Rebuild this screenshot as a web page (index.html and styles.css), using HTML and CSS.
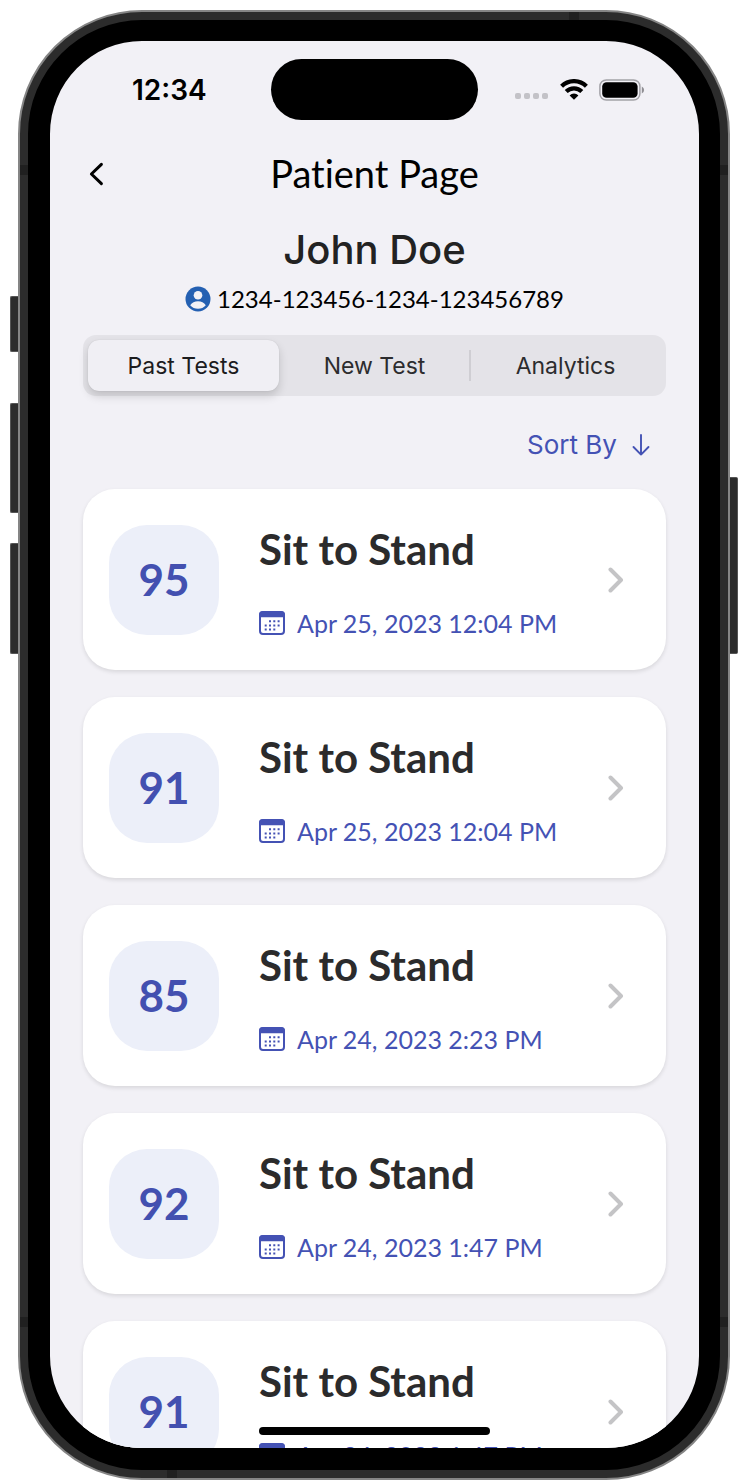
FILE: index.html
```
<!DOCTYPE html>
<html lang="en">
<head>
<meta charset="utf-8">
<meta name="viewport" content="width=device-width, initial-scale=1">
<title>Patient Page</title>
<link rel="stylesheet" href="styles.css">
</head>
<body>
<svg class="sprite" aria-hidden="true">
  <symbol id="calendar" viewBox="0 0 26 24">
    <rect x="1" y="1" width="24" height="22" rx="3" fill="none" stroke="currentColor" stroke-width="2"/>
    <path d="M.2 6.2V3.4Q.2.2 3.4.2h19.2q3.2 0 3.2 3.2v2.8z" fill="currentColor"/>
    <path d="M10 9.2h2v2h-2zm4.3 0h2v2h-2zm4.3 0h2v2h-2zM5.7 13.4h2v2h-2zm4.3 0h2v2h-2zm4.3 0h2v2h-2zm4.3 0h2v2h-2zM5.7 17.6h2v2h-2zm4.3 0h2v2h-2zm4.3 0h2v2h-2z" fill="currentColor"/>
  </symbol>
  <symbol id="chevron" viewBox="0 0 16 26">
    <path d="M2.5 2.5 13 13 2.5 23.5" fill="none" stroke="currentColor" stroke-width="4" stroke-linecap="round" stroke-linejoin="round"/>
  </symbol>
</svg>
<div class="phone">
  <span class="key key-mute"></span>
  <span class="key key-up"></span>
  <span class="key key-down"></span>
  <span class="key key-power"></span>
  <div class="frame">
    <span class="seam seam-left-top"></span>
    <span class="seam seam-left-bottom"></span>
    <span class="seam seam-right-top"></span>
    <span class="seam seam-right-bottom"></span>
    <span class="seam seam-top"></span>
    <span class="seam seam-bottom"></span>
    <div class="screen">
      <div class="status">
        <time class="clock">12:34</time>
        <span class="island"></span>
        <div class="signals">
          <svg width="34" height="6" viewBox="0 0 34 6" class="cell" aria-label="No signal"><g fill="#c3c2c7"><rect width="6" height="6" rx="2"/><rect x="9" width="6" height="6" rx="2"/><rect x="18" width="6" height="6" rx="2"/><rect x="27" width="6" height="6" rx="2"/></g></svg>
          <svg width="28" height="21" viewBox="0 0 28 21" aria-label="Wi-Fi"><g fill="none" stroke="#000" stroke-width="4.2"><path d="M1.6 7.2a17.6 17.6 0 0 1 24.8 0"/><path d="M6.2 12.6a11 11 0 0 1 15.6 0"/></g><path d="M9.6 16.4a6.3 6.3 0 0 1 8.8 0L14 20.8z"/></svg>
          <svg width="46" height="22" viewBox="0 0 46 22" aria-label="Battery full"><rect x=".9" y=".9" width="40" height="20.2" rx="6.4" fill="none" stroke="#a3a2a7" stroke-width="1.5"/><rect x="3.2" y="3.2" width="35.4" height="15.6" rx="4.4"/><path d="M42.8 7.4q2.3 1 2.3 3.6t-2.3 3.6z" fill="#8f8e93"/></svg>
        </div>
      </div>

      <header class="nav">
        <button class="back" aria-label="Back"><svg width="15" height="24" viewBox="0 0 15 24"><path d="M12.4 2.4 2.4 12l10 9.6" fill="none" stroke="#000" stroke-width="3" stroke-linecap="round" stroke-linejoin="round"/></svg></button>
        <h1 class="page-title">Patient Page</h1>
      </header>

      <section class="patient">
        <h2 class="name">John Doe</h2>
        <p class="record">
          <svg width="26" height="26" viewBox="0 0 26 26" aria-hidden="true"><circle cx="13" cy="13" r="12.5" fill="#2460b2"/><circle cx="13" cy="9.3" r="4.3" fill="#f2f1f6"/><path d="M5.2 19.3q2.7-4 7.8-4t7.8 4q-3 3.5-7.8 3.5t-7.8-3.5z" fill="#f2f1f6"/></svg>
          <span>1234-123456-1234-123456789</span>
        </p>
      </section>

      <nav class="tabs" aria-label="Sections">
        <button class="tab tab-active" aria-pressed="true">Past Tests</button>
        <button class="tab">New Test</button>
        <button class="tab tab-divided">Analytics</button>
      </nav>

      <button class="sort">Sort By <svg width="18" height="22" viewBox="0 0 18 22" aria-hidden="true"><path d="M9 1v19.6M1.5 13 9 20.6l7.5-7.6" fill="none" stroke="currentColor" stroke-width="1.9" stroke-linecap="round" stroke-linejoin="round"/></svg></button>

      <main class="list">
        <a class="card" href="#test-1"><span class="score">95</span><span class="details"><strong class="test">Sit to Stand</strong><span class="date"><svg class="cal"><use href="#calendar"/></svg>Apr 25, 2023 12:04 PM</span></span><svg class="go"><use href="#chevron"/></svg></a>
        <a class="card" href="#test-2"><span class="score">91</span><span class="details"><strong class="test">Sit to Stand</strong><span class="date"><svg class="cal"><use href="#calendar"/></svg>Apr 25, 2023 12:04 PM</span></span><svg class="go"><use href="#chevron"/></svg></a>
        <a class="card" href="#test-3"><span class="score">85</span><span class="details"><strong class="test">Sit to Stand</strong><span class="date"><svg class="cal"><use href="#calendar"/></svg>Apr 24, 2023 2:23 PM</span></span><svg class="go"><use href="#chevron"/></svg></a>
        <a class="card" href="#test-4"><span class="score">92</span><span class="details"><strong class="test">Sit to Stand</strong><span class="date"><svg class="cal"><use href="#calendar"/></svg>Apr 24, 2023 1:47 PM</span></span><svg class="go"><use href="#chevron"/></svg></a>
        <a class="card" href="#test-5"><span class="score">91</span><span class="details"><strong class="test">Sit to Stand</strong><span class="date"><svg class="cal"><use href="#calendar"/></svg>Apr 24, 2023 1:47 PM</span></span><svg class="go"><use href="#chevron"/></svg></a>
      </main>
      <span class="home"></span>
    </div>
  </div>
</div>
</body>
</html>
```
FILE: styles.css
```
* { box-sizing: border-box; }

body {
  margin: 0;
  background: #fff;
  color: #000;
  font-family: Lato, sans-serif;
  font-variant-ligatures: none;
}

h1, h2, p { margin: 0; font-weight: 400; }

button {
  border: 0;
  padding: 0;
  background: none;
  color: inherit;
  font: inherit;
}

svg { display: block; flex: none; }
.sprite { position: absolute; width: 0; height: 0; }

/* Device */
.phone {
  position: relative;
  height: 100vh;
  padding: 10px 18px 3px;
}

.frame {
  position: relative;
  height: 100%;
  padding: 8px;
  border: 2px solid #858585;
  border-radius: 124px;
  background: #2c2c2c;
}

.screen {
  position: relative;
  display: flex;
  flex-direction: column;
  height: 100%;
  overflow: hidden;
  border: 22px solid #000;
  border-top-width: 21px;
  border-right-width: 21px;
  border-radius: 114px;
  background: #f2f1f6;
}

.key {
  position: absolute;
  left: 10px;
  width: 9px;
  border: 1px solid #555;
  border-right-width: 0;
  border-radius: 2px 0 0 2px;
  background: #2c2c2c;
}
.key-mute { top: 296px; height: 56px; }
.key-up { top: 403px; height: 110px; }
.key-down { top: 543px; height: 111px; }
.key-power {
  left: auto;
  right: 10px;
  top: 477px;
  height: 177px;
  border-width: 1px 1px 1px 0;
  border-radius: 0 2px 2px 0;
}

.seam { position: absolute; width: 8px; height: 10px; background: #202020; }
.seam-left-top { left: 0; top: 153px; }
.seam-left-bottom { left: 0; bottom: 151px; }
.seam-right-top { right: 0; top: 153px; }
.seam-right-bottom { right: 0; bottom: 151px; }
.seam-top { right: 149px; top: 0; width: 10px; height: 8px; }
.seam-bottom { left: 147px; bottom: 0; width: 10px; height: 8px; }

/* Status bar */
.status {
  display: grid;
  grid-template-columns: 139px auto 1fr;
  align-items: center;
  flex: none;
  padding: 18px 54px 0 82px;
}
.clock { font: 600 28px/34px Inter, sans-serif; }
.island {
  width: 207px;
  height: 61px;
  border-radius: 31px;
  background: #000;
}
.signals { display: flex; align-items: center; justify-content: flex-end; gap: 11px; }
.cell { align-self: flex-end; margin-bottom: 2px; }

/* Header */
.nav {
  display: grid;
  grid-template-columns: 40px 1fr 40px;
  align-items: center;
  flex: none;
  padding: 32px 39px 0;
}
.page-title { font-size: 38px; line-height: 42px; padding-bottom: 2px; text-align: center; }

.patient { flex: none; padding-top: 30px; text-align: center; }
.name { color: #222; font: 500 40px/48px Inter, sans-serif; }
.record {
  display: flex;
  align-items: center;
  justify-content: center;
  gap: 6px;
  padding-top: 10px;
  font-size: 24px;
  line-height: 30px;
}

/* Segmented control */
.tabs {
  display: grid;
  grid-template-columns: repeat(3, 1fr);
  flex: none;
  margin: 21px 33px 0;
  padding: 5px;
  border-radius: 13px;
  background: #e4e3e8;
}
.tab {
  position: relative;
  height: 51px;
  color: #2c2c2e;
  font: 400 23px/28px Inter, sans-serif;
}
.tab-active {
  border-radius: 11px;
  background: #f0eff4;
  box-shadow: 0 0 1px rgba(0, 0, 0, .16), 0 5px 10px rgba(0, 0, 0, .16);
  color: #1c1c1e;
}
.tab-divided::before {
  content: "";
  position: absolute;
  left: -1px;
  top: 10px;
  bottom: 10px;
  width: 2px;
  background: #cfced3;
}

.sort {
  display: flex;
  align-items: center;
  align-self: flex-end;
  gap: 15px;
  flex: none;
  margin: 33px 49px 29px 0;
  color: #4452b4;
  font: 400 26px/31px Inter, sans-serif;
}

/* Results */
.list {
  display: flex;
  flex-direction: column;
  gap: 27px;
  flex: 1;
  min-height: 0;
  padding: 0 33px;
}
.card {
  display: flex;
  align-items: center;
  flex: none;
  padding: 32px 42px 32px 26px;
  border-radius: 32px;
  background: #fff;
  box-shadow: 0 2px 4px rgba(0, 0, 0, .11);
  color: #2b2b2c;
  text-decoration: none;
}
.score {
  display: grid;
  place-items: center;
  width: 110px;
  height: 110px;
  padding-bottom: 2px;
  border-radius: 38px;
  background: #eceff9;
  color: #4350b0;
  font-size: 44px;
  font-weight: 700;
}
.details {
  display: flex;
  flex-direction: column;
  flex: 1;
  gap: 34px;
  padding: 3px 0 0 40px;
}
.test { font-size: 42px; line-height: 50px; }
.date {
  display: flex;
  align-items: center;
  gap: 12px;
  color: #4452b4;
  font-size: 25px;
  line-height: 30px;
}
.cal { width: 26px; height: 24px; }
.go { width: 16px; height: 26px; color: #c4c4c6; }

.home {
  position: absolute;
  left: 50%;
  bottom: 13px;
  width: 231px;
  height: 8px;
  margin-left: -116px;
  border-radius: 4px;
  background: #000;
}
```
